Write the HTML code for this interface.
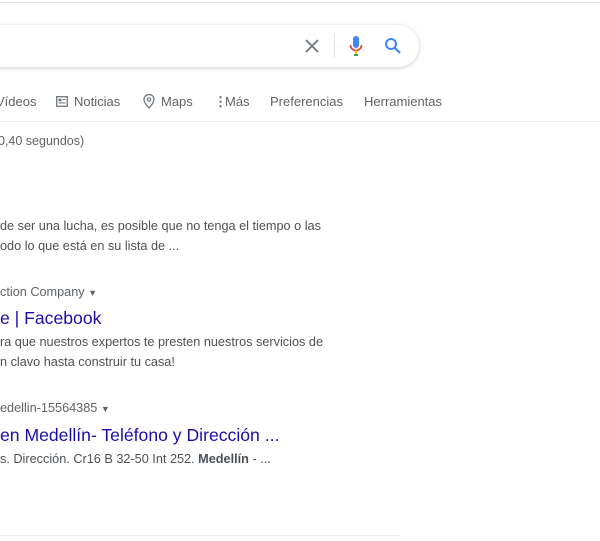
<!DOCTYPE html>
<html><head><meta charset="utf-8"><style>
body{margin:0;width:600px;height:541px;background:#fff;position:relative;overflow:hidden;font-family:"Liberation Sans",Arial,sans-serif;}
.a{position:absolute;white-space:nowrap;}
.s{font-size:12.7px;color:#4d5156;}
.t{font-size:17.6px;color:#1a0dab;}
.g{font-size:12.5px;color:#5f6368;}
</style></head><body>
<div class="a" style="left:0;top:2px;width:600px;height:1px;background:#e6e6e6"></div>
<div class="a" style="left:-30px;top:25px;width:449px;height:42px;border-radius:22px;box-shadow:0 1px 5px rgba(32,33,36,.22);background:#fff"></div>
<svg class="a" style="left:304px;top:38px" width="16" height="16" viewBox="0 0 16 16"><path d="M2 2L14 14M14 2L2 14" stroke="#70757a" stroke-width="1.8"/></svg>
<div class="a" style="left:334px;top:34px;width:1px;height:24px;background:#dfe1e5"></div>
<svg class="a" style="left:348px;top:35px" width="16" height="22" viewBox="0 0 16 22"><rect x="5" y="1" width="6" height="12" rx="3" fill="#4285f4"/><path d="M2.5 10a5.5 5.5 0 0 0 11 0" stroke="#ea4335" stroke-width="1.8" fill="none"/><path d="M8 15.5v4" stroke="#fbbc05" stroke-width="2"/><path d="M6 20h4" stroke="#34a853" stroke-width="2"/></svg>
<svg class="a" style="left:384px;top:37px" width="18" height="18" viewBox="0 0 18 18"><circle cx="7" cy="7" r="5" stroke="#4285f4" stroke-width="2" fill="none"/><path d="M10.8 10.8L16 16" stroke="#4285f4" stroke-width="2.2"/></svg>
<div class="a g" style="left:-4px;top:94px;font-size:13px">Vídeos</div>
<svg class="a" style="left:56px;top:96px" width="12" height="11" viewBox="0 0 12 11"><rect x="0.7" y="0.7" width="10.6" height="9.6" fill="none" stroke="#70757a" stroke-width="1.3"/><rect x="2.5" y="2.8" width="3" height="2.5" fill="#70757a"/><path d="M6.5 3.5h3M2.5 7h7" stroke="#70757a" stroke-width="1"/></svg>
<div class="a g" style="left:74px;top:94px;font-size:13px">Noticias</div>
<svg class="a" style="left:143px;top:94px" width="12" height="15" viewBox="0 0 12 15"><path d="M6 14C6 14 1 8.5 1 5.5a5 5 0 0 1 10 0C11 8.5 6 14 6 14z" fill="none" stroke="#70757a" stroke-width="1.3"/><circle cx="6" cy="5.5" r="1.7" fill="none" stroke="#70757a" stroke-width="1.2"/></svg>
<div class="a g" style="left:161px;top:94px;font-size:13px">Maps</div>
<div class="a g" style="left:214px;top:94px;font-size:13px;font-weight:bold">⋮</div>
<div class="a g" style="left:225px;top:94px;font-size:13px">Más</div>
<div class="a g" style="left:270px;top:94px;font-size:13px">Preferencias</div>
<div class="a g" style="left:364px;top:94px;font-size:13px">Herramientas</div>
<div class="a" style="left:0;top:121px;width:600px;height:1px;background:#ebebeb"></div>
<div class="a g" style="left:-2px;top:134px;font-size:12.5px">0,40 segundos)</div>
<div class="a s" style="left:0;top:219px">de ser una lucha, es posible que no tenga el tiempo o las</div>
<div class="a s" style="left:0;top:239px">odo lo que está en su lista de ...</div>
<div class="a s" style="left:0;top:285px;color:#5f6368">ction Company <span style="font-size:9px">▼</span></div>
<div class="a t" style="left:0;top:308px">e | Facebook</div>
<div class="a s" style="left:0;top:335px">ra que nuestros expertos te presten nuestros servicios de</div>
<div class="a s" style="left:0;top:355px">n clavo hasta construir tu casa!</div>
<div class="a s" style="left:0;top:401px;color:#5f6368">edellin-15564385 <span style="font-size:9px">▼</span></div>
<div class="a t" style="left:0;top:425px">en Medellín- Teléfono y Dirección ...</div>
<div class="a s" style="left:0;top:452px">s. Dirección. Cr16 B 32-50 Int 252. <b>Medellín</b> - ...</div>
<div class="a" style="left:0;top:535px;width:400px;height:1px;background:#ebebeb"></div>
</body></html>
